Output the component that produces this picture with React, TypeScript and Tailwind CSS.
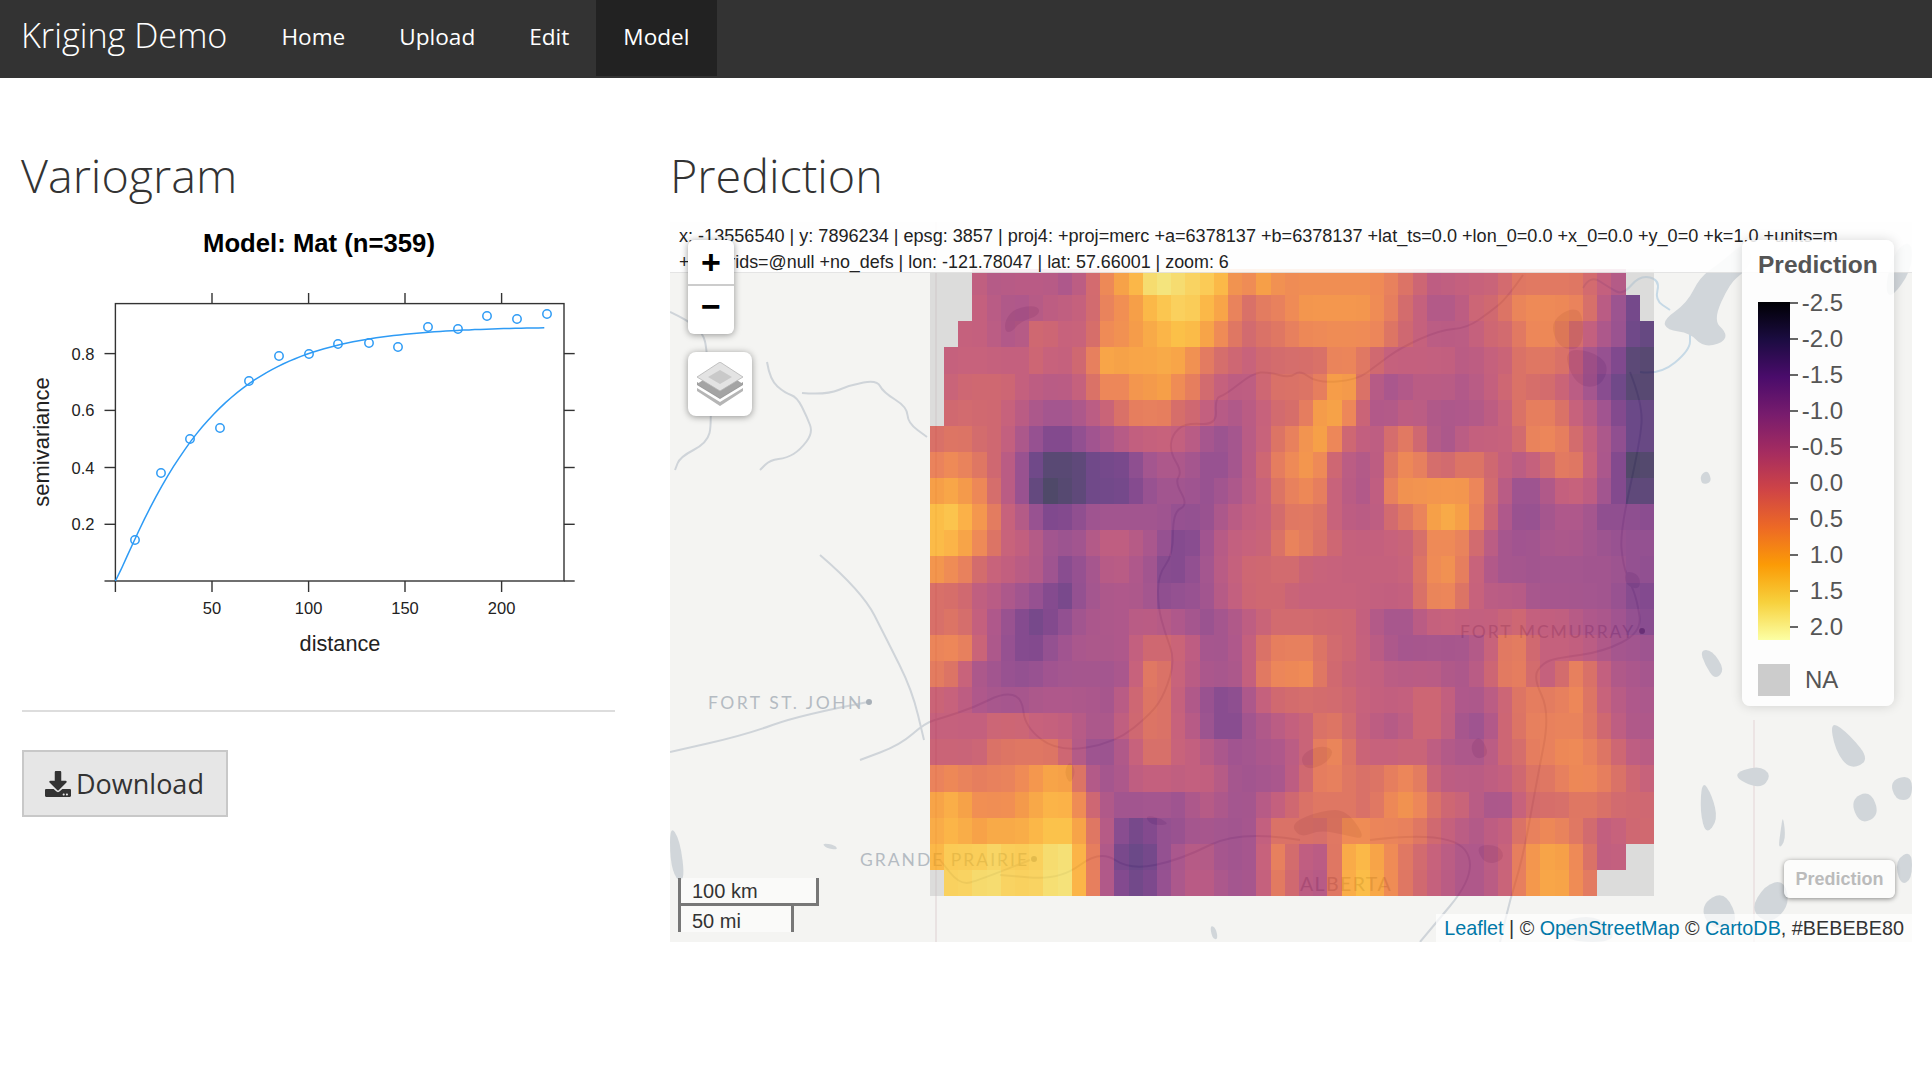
import { FaDownload } from "react-icons/fa";

const LEVELS = "0123456789abcdefghij";

// colours as they look over the light basemap
const SEEN = [
  "#46425f", "#54466f", "#6b4589", "#80498f", "#945192", "#a25590", "#ad588c", "#ba5c85", "#c5617e", "#d06971",
  "#dd7565", "#e8815e", "#ef8c56", "#f49a4c", "#f8a842", "#fbb53f", "#fbc24c", "#f9d160", "#f5de74", "#f2ec8e",
];

const toRgb = (hex: string) => [1, 3, 5].map((i) => parseInt(hex.slice(i, i + 2), 16));

// the layer sits at 70% opacity over the tiles, so undo that for the real fill
function cellColor(level: number) {
  const lo = Math.floor(level);
  const hi = Math.min(lo + 1, SEEN.length - 1);
  const a = toRgb(SEEN[lo]);
  const b = toRgb(SEEN[hi]);
  const t = level - lo;
  const rgb = a.map((v, i) => {
    const seen = v + (b[i] - v) * t;
    return Math.max(0, Math.min(255, Math.round((seen - 73) / 0.7)));
  });
  return `rgb(${rgb.join(",")})`;
}

// one char per cell, 51 x 24
const RASTER = [
  "___86777757" + "9cefjjihhgccfcc" + "ccccccba9788889aaaaa987__",
  "___87666788" + "9bcdfghhfeb9abc" + "dddddcb98667" + "99a" + "ccccc" + "a742_",
  "__88766a9889ccdefggeca9aab" + "cccccca98777899accb986522",
  "_8888889889" + "bfeeeeeca998999" + "99bba9" + "88888" + "77" + "88" + "aaaa" + "8" + "54311",
  "_8999987778acbddecb98779aa" + "aaeea" + "656777678" + "9a998753211",
  "_9999" + "87655678abbb998767899" + "aeec8" + "6677" + "6666" + "78" + "abba" + "87" + "5322",
  "9aa998643345" + "678888754578ab" + "dec88" + "7ab96" + "57888" + "9ccb9" + "86422",
  "bcba97421112223566544579bc" + "dc8767acb99aa98789bb86301",
  "dedc97" + "41011" + "2223" + "4555" + "4567" + "8ab" + "cb8767" + "cddddd" + "c97446" + "88853" + "11",
  "ghfdb87" + "4334" + "555555" + "444" + "67889a" + "aa8777" + "9abefe" + "b96445" + "66534" + "44",
  "gfeca887" + "555788" + "764335" + "7888ac" + "ba9" + "88888" + "9cbb97" + "555666" + "55444",
  "dcb98877" + "534577" + "653345" + "789999" + "88888888" + "acdb86" + "555555555" + "44",
  "99977654" + "324566" + "653445" + "789998" + "88888888" + "acca8777" + "555555" + "433",
  "9a986432" + "345666" + "777654" + "567899" + "99998655" + "7888888" + "9888" + "766543",
  "ccc96433" + "456666" + "899985" + "568abb" + "ba9987" + "655555" + "68bb98" + "87765" + "55",
  "ba855444" + "555555" + "8ba876" + "668bcc" + "da9888" + "777766" + "79bb97" + "9ca86" + "65",
  "88765556" + "666657" + "9aa864" + "336899" + "99998888" + "998667" + "8abbbc" + "a8766",
  "88889998" + "887668" + "9aa874" + "335678" + "8aa987" + "679985" + "469abb" + "bba97" + "66",
  "8888aaaa" + "a86446" + "8aa887" + "655667" + "8bca88" + "888766" + "6799bb" + "ccba9" + "77",
  "bcbbbbcd" + "efa656" + "888888" + "755557" + "9bbaaabcb8777889aabccba98",
  "efecccde" + "ffc965" + "555467" + "655789" + "aaaa9a" + "cdca99" + "755899" + "9aaa9" + "99",
  "efedeeef" + "ggea73" + "234455" + "5558aa" + "aaaccb" + "bba987" + "688abc" + "ba978" + "99",
  "fhhhihhh" + "ijfb62" + "224677" + "5558c9" + "76afge" + "ca9876" + "678bde" + "eca78" + "__",
  "_hhiihhh" + "ijfb63" + "234677" + "6558b9" + "76afge" + "ca9876" + "678bde" + "eca" + "____",
];

// pull each cell a little toward its neighbours, the read values are noisier than the picture
function smoothedLevel(r: number, i: number) {
  const at = (rr: number, ii: number) => {
    const c = RASTER[rr]?.[ii];
    return c === undefined || c === "_" ? null : LEVELS.indexOf(c);
  };
  const self = at(r, i) as number;
  const around = [at(r - 1, i), at(r + 1, i), at(r, i - 1), at(r, i + 1)].filter((v) => v !== null) as number[];
  if (!around.length) return self;
  const mean = around.reduce((a, b) => a + b, 0) / around.length;
  return self * 0.55 + mean * 0.45;
}

const RIVERS = [
  "M767 362L770 380 785 393 797 397 807 417 813 433 800 450 787 458 770 460 760 470",
  "M802 393L827 395 850 385 877 380 883 392 907 407 908 423 927 437",
  "M670 312L687 320 703 333 707 350 712 423 707 443 680 457 675 470",
  "M820 555L862 591 887 640 912 690 924 740",
  "M868 702L800 715 745 735 670 752",
  "M1523 275L1507 298 1490 312 1467 328 1440 330 1400 348 1377 365 1357 380 1317 383 1300 370 1290 378 1268 372 1253 373 1225 395 1215 398 1217 425 1185 423 1172 435 1170 452 1182 472 1175 482 1188 505 1173 512 1173 555 1158 575 1158 607 1165 633 1175 660 1165 693 1152 713 1115 743 1058 752 1025 727 1022 697 1003 693 975 707 942 718 925 723 900 745 860 760",
  "M1630 372L1643 405 1640 442 1620 532 1623 565 1630 582 1637 600 1642 632 1603 652 1557 658 1543 663 1533 677 1550 713 1537 780 1523 857 1510 900 1500 942",
  "M1300 840L1240 830 1180 860 1130 870 1100 850 1060 880 1000 875",
  "M1370 840L1450 830 1480 870 1420 942",
  "M1030 860L980 880 960 885 940 860",
];

const BLUE_RIVERS = [
  "M1583 288L1590 275 1610 288 1623 295 1640 275 1660 280 1655 300 1670 310",
  "M1640 372L1660 375 1690 350 1690 333",
];

const LAKES = [
  "M1747 240L1720 263 1700 277 1687 303 1663 320 1667 330 1690 333 1703 347 1723 343 1727 333 1713 320 1730 283 1743 273 1753 260Z",
  "M1005 320L1015 308 1038 305 1040 315 1020 322 1012 332 1005 332Z",
  "M1553 320L1570 308 1583 312 1583 348 1563 350 1553 335Z",
  "M1563 350L1590 350 1610 365 1600 388 1575 385Z",
  "M1290 823L1323 810 1347 810 1367 840 1345 835 1320 830 1300 838Z",
  "M1300 755L1320 745 1335 750 1325 765 1305 770Z",
  "M1470 745L1480 735 1490 755 1475 760Z",
  "M1475 845L1500 845 1505 860 1485 865Z",
  "M1625 570L1640 575 1640 590 1625 585Z",
  "M1700 475L1708 470 1712 482 1702 485Z",
  "M1700 650L1712 650 1725 670 1715 680 1705 665Z",
  "M1702 780L1712 795 1718 820 1706 835 1700 812Z",
  "M1783 815L1786 840 1778 850 1781 828Z",
  "M1750 910L1765 885 1784 880 1790 905 1770 925Z",
  "M1895 860L1912 850 1912 880 1900 885Z",
  "M1730 775L1760 790 1772 775 1758 765Z",
  "M1850 800L1870 790 1880 815 1860 825Z",
  "M1890 780L1912 775 1912 800 1895 800Z",
  "M1830 720L1850 735 1870 760 1850 770 1835 750Z",
  "M1895 250L1912 240 1912 270 1890 300 1885 285Z",
  "M1560 920L1600 915 1620 942 1565 942Z",
  "M1700 905L1725 890 1740 925 1710 930Z",
  "M1070 760L1076 772 1070 785 1064 772Z",
  "M1145 815L1160 818 1170 825 1150 825Z",
  "M1210 925L1216 928 1218 940 1212 938Z",
  "M670 825L680 840 685 880 676 880 670 860Z",
  "M822 843L835 845 838 850 826 848Z",
];

// corners of the traced outlines rounded off with quadratics
function roundPath(d: string) {
  const n = d.match(/[\d.]+/g)!.map(Number);
  const p: [number, number][] = [];
  for (let i = 0; i < n.length; i += 2) p.push([n[i], n[i + 1]]);
  const mid = (a: [number, number], b: [number, number]) => `${(a[0] + b[0]) / 2} ${(a[1] + b[1]) / 2}`;
  if (d.endsWith("Z")) {
    let out = `M${mid(p[p.length - 1], p[0])}`;
    p.forEach((pt, i) => {
      out += `Q${pt[0]} ${pt[1]} ${mid(pt, p[(i + 1) % p.length])}`;
    });
    return out + "Z";
  }
  let out = `M${p[0][0]} ${p[0][1]}`;
  for (let i = 1; i < p.length - 1; i++) out += `Q${p[i][0]} ${p[i][1]} ${mid(p[i], p[i + 1])}`;
  return out + `L${p[p.length - 1][0]} ${p[p.length - 1][1]}`;
}

const POINTS: [number, number][] = [
  [135, 540], [161, 473], [190, 439], [220, 428], [249, 381], [279, 356], [309, 354], [338, 344],
  [369, 343], [398, 347], [428, 327], [458, 329], [487, 316], [517, 319], [547, 314],
];

function variogramCurve() {
  let d = "M115.4 581";
  for (let h = 3; h <= 223; h += 3) {
    const g = 0.895 * (1 - Math.exp(-Math.pow(h / 48, 1.1)));
    d += `L${(115.4 + h * 1.932).toFixed(1)} ${(581 - g * 284.25).toFixed(1)}`;
  }
  return d;
}

function VariogramChart() {
  const text = "font-['Liberation_Sans',Arial,sans-serif] fill-[#222]";
  return (
    <svg viewBox="22 222 593 468" className="block w-[593px] h-[468px]">
      <text x="319" y="252" textAnchor="middle" fontSize="25.7" fontWeight="700" className={text + " fill-black"}>
        Model: Mat (n=359)
      </text>

      <rect x="115.4" y="303.6" width="448.6" height="277.4" fill="none" stroke="#333" strokeWidth="1.4" />
      {[212, 308.6, 405, 501.6].map((x) => (
        <g key={x} stroke="#333" strokeWidth="1.4">
          <line x1={x} x2={x} y1="293" y2="303.6" />
          <line x1={x} x2={x} y1="581" y2="592" />
        </g>
      ))}
      <line x1="115.4" x2="115.4" y1="581" y2="592" stroke="#333" strokeWidth="1.4" />
      {[353.6, 410.4, 467.5, 524.3, 581].map((y) => (
        <g key={y} stroke="#333" strokeWidth="1.4">
          <line x1="104.5" x2="115.4" y1={y} y2={y} />
          <line x1="564" x2="574.7" y1={y} y2={y} />
        </g>
      ))}

      {[
        ["50", 212],
        ["100", 308.6],
        ["150", 405],
        ["200", 501.6],
      ].map(([t, x]) => (
        <text key={t} x={x} y="614" textAnchor="middle" fontSize="16.5" className={text}>
          {t}
        </text>
      ))}
      {[
        ["0.8", 353.6],
        ["0.6", 410.4],
        ["0.4", 467.5],
        ["0.2", 524.3],
      ].map(([t, y]) => (
        <text key={t} x="94.5" y={Number(y) + 6} textAnchor="end" fontSize="16.5" className={text}>
          {t}
        </text>
      ))}
      <text x="340" y="651" textAnchor="middle" fontSize="21.7" className={text}>
        distance
      </text>
      <text x="0" y="0" textAnchor="middle" fontSize="22" transform="translate(49 442) rotate(-90)" className={text}>
        semivariance
      </text>

      <path d={variogramCurve()} fill="none" stroke="#2e9bf5" strokeWidth="1.5" />
      {POINTS.map(([x, y]) => (
        <circle key={x} cx={x} cy={y} r="4.2" fill="none" stroke="#2e9bf5" strokeWidth="1.5" />
      ))}
    </svg>
  );
}

function MapCanvas() {
  const label = "font-['Lato',sans-serif] fill-[#b4bbc2]";
  return (
    <svg viewBox="670 222 1242 720" className="block w-full h-full">
      <rect x="670" y="222" width="1242" height="720" fill="#f4f4f2" />
      <line x1="936" x2="936" y1="222" y2="942" stroke="#e6dcdc" strokeWidth="1.5" />
      <line x1="1754" x2="1754" y1="720" y2="942" stroke="#eadfdf" strokeWidth="1.5" />

      {RIVERS.map((d) => (
        <path key={d} d={roundPath(d)} fill="none" stroke="#cfd4d9" strokeWidth="2" />
      ))}
      {BLUE_RIVERS.map((d) => (
        <path key={d} d={roundPath(d)} fill="none" stroke="#c6d9e6" strokeWidth="2" />
      ))}
      {LAKES.map((d) => (
        <path key={d} d={roundPath(d)} fill="#d1d6da" />
      ))}

      <text x="708" y="709" fontSize="17.5" letterSpacing="2.5" className={label}>
        FORT ST. JOHN
      </text>
      <circle cx="869" cy="702" r="3" fill="#a8b0b8" />
      <text x="860" y="866" fontSize="17.5" letterSpacing="2" className={label}>
        GRANDE PRAIRIE
      </text>
      <circle cx="1034" cy="859" r="3" fill="#a8b0b8" />
      <text x="1460" y="638" fontSize="17.5" letterSpacing="2" className={label}>
        FORT MCMURRAY
      </text>
      <circle cx="1642" cy="631" r="3" fill="#8a929a" />
      <text x="1300" y="891" fontSize="19.5" letterSpacing="1.4" className={label}>
        ALBERTA
      </text>

      <g className="blur-[0.5px]">
        {RASTER.map((row, r) =>
          row.split("").map((c, i) => (
            <rect
              key={r + "-" + i}
              x={929.7 + i * 14.2}
              y={269 + r * 26.125}
              width="14.2"
              height="26.125"
              fill={c === "_" ? "#bebebe" : cellColor(smoothedLevel(r, i))}
              fillOpacity={c === "_" ? 0.45 : 0.7}
              shapeRendering="crispEdges"
            />
          ))
        )}
      </g>
    </svg>
  );
}

function Legend() {
  const labels = ["-2.5", "-2.0", "-1.5", "-1.0", "-0.5", "0.0", "0.5", "1.0", "1.5", "2.0"];
  return (
    <div className="absolute top-[18px] right-[18px] w-[152px] h-[466px] rounded-lg bg-white/85 shadow-[0_0_12px_rgba(0,0,0,0.15)] pl-4 pt-[10px] text-[#555] font-['Liberation_Sans',Arial,sans-serif]">
      <div className="text-[24.5px] leading-[30px] font-bold whitespace-nowrap">Prediction</div>
      <div className="flex h-[338px] mt-[22px]">
        <div className="w-8 h-full [background-image:linear-gradient(to_bottom,#000004,#1b0c41,#4a0c6b,#781c6d,#a52c60,#cf4446,#ed6925,#fb9b06,#f7d13d,#fcffa4)]" />
        <div className="w-[53px] -mt-[17px]">
          {labels.map((l) => (
            <div key={l} className="flex items-center h-9">
              <div className="w-2 h-[2px] bg-[#666] shrink-0" />
              <div className="flex-1 text-right text-2xl leading-9">{l}</div>
            </div>
          ))}
        </div>
      </div>
      <div className="flex items-center mt-6">
        <div className="w-8 h-8 bg-[#ccc]" />
        <div className="ml-[15px] text-2xl leading-8">NA</div>
      </div>
    </div>
  );
}

function LayersIcon() {
  return (
    <svg viewBox="0 0 46 44" className="w-[46px] h-[44px]">
      <path d="M0 29L23 44 46 29 46 26 23 40 0 26Z" fill="#b5b5b5" />
      <path d="M0 23L23 37 46 23 46 20 23 35 0 20Z" fill="#9c9c9c" />
      <path d="M0 22L23 7 46 22 23 36Z" fill="#a4a4a4" />
      <path d="M0 15L23 0 46 15 23 29Z" fill="#e3e3e3" stroke="#b5b5b5" strokeWidth="0.8" />
      <path d="M11 15L23 8 35 15 23 22Z" fill="#c9c9c9" />
    </svg>
  );
}

function ScaleBar() {
  return (
    <div className="absolute left-2 bottom-[10px] text-[20px] leading-[27px] text-[#333] font-['Liberation_Sans',Arial,sans-serif]">
      <div className="w-[141px] h-[28px] border-x-[3px] border-b-[3px] border-[#777] bg-white/50 pl-[11px] whitespace-nowrap">
        100 km
      </div>
      <div className="w-[116px] h-[26px] border-x-[3px] border-[#777] bg-white/50 pl-[11px] pt-[2px] whitespace-nowrap">
        50 mi
      </div>
    </div>
  );
}

function PredictionMap() {
  return (
    <div className="relative h-[720px] overflow-hidden bg-[#f4f4f2]">
      <MapCanvas />

      {/* mouse coordinates */}
      <div className="absolute top-0 inset-x-0 h-[51px] bg-white/90 border-b border-black/10 pl-[9px] pt-[1px] leading-[26px] text-[#222] font-['Liberation_Sans',Arial,sans-serif] whitespace-nowrap">
        <div className="text-[18.08px]">
          x: -13556540 | y: 7896234 | epsg: 3857 | proj4: +proj=merc +a=6378137 +b=6378137 +lat_ts=0.0 +lon_0=0.0 +x_0=0.0 +y_0=0 +k=1.0 +units=m
        </div>
        <div className="text-[17.9px]">+nadgrids=@null +no_defs | lon: -121.78047 | lat: 57.66001 | zoom: 6</div>
      </div>

      {/* zoom buttons */}
      <div className="absolute left-[18px] top-[18px] w-[46px] h-[94px] rounded-md bg-white shadow-[0_1px_7px_rgba(0,0,0,0.4)] flex flex-col text-black font-['Liberation_Sans',Arial,sans-serif] font-bold">
        <div className="h-[46px] border-b-2 border-[#ccc] flex items-center justify-center text-[34px] leading-none">+</div>
        <div className="flex-1 pb-2 flex items-center justify-center text-[34px] leading-none">−</div>
      </div>

      {/* layers */}
      <div className="absolute left-[18px] top-[130px] w-16 h-16 rounded-lg bg-white shadow-[0_1px_7px_rgba(0,0,0,0.4)] flex items-center justify-center">
        <LayersIcon />
      </div>

      <Legend />
      <ScaleBar />

      <div className="absolute right-[17px] bottom-[44px] w-[111px] h-[38px] rounded-md bg-white/70 shadow-[0_1px_5px_rgba(0,0,0,0.45)] flex items-center justify-center text-[18px] font-bold text-[#bbb] font-['Liberation_Sans',Arial,sans-serif]">
        Prediction
      </div>

      {/* attribution */}
      <div className="absolute right-0 bottom-0 h-7 pl-2 pr-2 bg-white/70 text-[19.8px] leading-7 text-[#333] font-['Liberation_Sans',Arial,sans-serif] whitespace-nowrap">
        <span className="text-[#0078a8]">Leaflet</span> | © <span className="text-[#0078a8]">OpenStreetMap</span> © <span className="text-[#0078a8]">CartoDB</span>, #BEBEBE80
      </div>
    </div>
  );
}

export default function App() {
  const links = ["Home", "Upload", "Edit", "Model"];
  return (
    <div className="min-h-screen bg-white font-['Open_Sans',sans-serif]">
      <nav className="flex h-[78px] bg-[#333] text-white">
        <div className="pl-[21px] pr-[27px] text-[34.2px] font-light leading-[70px] whitespace-nowrap">Kriging Demo</div>
        {links.map((l) => (
          <a
            key={l}
            className={
              l === "Model"
                ? "h-[76px] px-[27px] text-[22.6px] leading-[74px] bg-[#222]"
                : "h-[76px] px-[27px] text-[22.6px] leading-[74px]"
            }
          >
            {l}
          </a>
        ))}
      </nav>

      <main className="flex gap-[55px] pl-[22px] pr-5">
        <section className="w-[593px] shrink-0">
          <h2 className="h-[144px] pt-[65px] -ml-px text-[46.7px] font-light leading-[64px] text-[#333]">Variogram</h2>
          <VariogramChart />
          <hr className="mt-[20px] border-t-2 border-[#ddd]" />
          <button className="flex items-center gap-[5px] mt-[38px] w-[206px] h-[67px] pl-[21px] pt-px bg-[#e6e6e6] border-2 border-[#c8c8c8] text-[27px] text-[#333]">
            <FaDownload className="w-[26px] h-[26px]" />
            Download
          </button>
        </section>
        <section className="flex-1 min-w-0">
          <h2 className="h-[144px] pt-[65px] text-[46.7px] font-light leading-[64px] text-[#333]">Prediction</h2>
          <PredictionMap />
        </section>
      </main>
    </div>
  );
}
